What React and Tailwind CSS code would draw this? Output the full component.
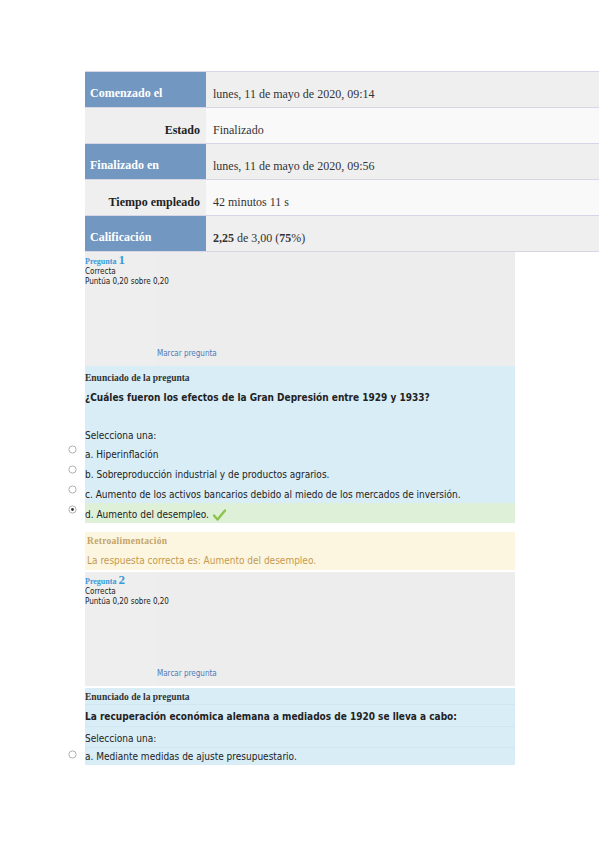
import React from 'react';

const serif = { fontFamily: '"Liberation Serif", "DejaVu Serif", serif' };
const sans = { fontFamily: '"DejaVu Sans Condensed", "DejaVu Sans", sans-serif' };

const summary = [
  { label: 'Comenzado el', value: 'lunes, 11 de mayo de 2020, 09:14', blue: true },
  { label: 'Estado', value: 'Finalizado' },
  { label: 'Finalizado en', value: 'lunes, 11 de mayo de 2020, 09:56', blue: true },
  { label: 'Tiempo empleado', value: '42 minutos 11 s' },
  {
    label: 'Calificación',
    value: (
      <>
        <b>2,25</b>&nbsp;de 3,00 (<b>75</b>%)
      </>
    ),
    blue: true,
  },
];

const Radio = ({ checked }) => (
  <div className="w-[20px] shrink-0 bg-white pl-[3px] pt-[2px]">
    <svg width="9" height="9" viewBox="0 0 9 9">
      <circle cx="4.5" cy="4.5" r="3.6" fill="#fff" stroke="#a8a8a8" strokeWidth="0.9" />
      {checked && <circle cx="4.5" cy="4.5" r="1.4" fill="#333" />}
    </svg>
  </div>
);

const QuestionInfo = ({ num }) => (
  <div className="w-[430px] h-[114px] bg-[#eeeeee] flex">
    <div className="relative z-10 w-[72px] h-full pt-[3px] text-[8px] leading-[10px] text-[#222] whitespace-nowrap" style={sans}>
      <div className="text-[#3a9ad9] font-bold" style={serif}>
        <span className="text-[8px]">Pregunta </span>
        <span className="text-[13px]">{num}</span>
      </div>
      <div>Correcta</div>
      <div>Puntúa 0,20 sobre 0,20</div>
    </div>
    <div className="flex-1 bg-[#ededed] flex items-end pb-[6px]">
      <span className="text-[8px] text-[#4a7cb8]" style={sans}>Marcar pregunta</span>
    </div>
  </div>
);

const Option = ({ text, checked, correct, green, short }) => (
  <div className={`flex -ml-[20px] w-[450px] ${short ? 'h-[17px]' : 'h-[20px]'}`}>
    <Radio checked={checked} />
    <div
      className={`flex-1 flex items-end pb-[1px] text-[10px] text-[#222] ${green ? 'bg-[#dff0d8]' : 'bg-[#d9edf7]'}`}
      style={sans}
    >
      <span>{text}</span>
      {correct && (
        <svg className="ml-[4px] mb-[1px]" width="13" height="12" viewBox="0 0 13 12">
          <path d="M1 6.5 L4.5 10.5 L12 1.5" fill="none" stroke="#8cc34a" strokeWidth="2.4" strokeLinecap="round" strokeLinejoin="round" />
        </svg>
      )}
    </div>
  </div>
);

export default function App() {
  return (
    <div className="min-h-[848px] bg-white pt-[71px] pl-[85px]">
      <div className="border-t border-[#d6d6e6]">
        {summary.map((row, i) => (
          <div key={i} className="flex h-[36px] border-b border-[#d6d6e6]" style={serif}>
            <div
              className={`w-[121px] shrink-0 flex items-center text-[12px] font-bold ${
                row.blue ? 'bg-[#7297c0] text-white pl-[5px] pt-[6px]' : 'bg-[#efefef] text-[#222] justify-end pr-[6px] pt-[8px]'
              }`}
            >
              {row.label}
            </div>
            <div
              className={`flex-1 flex items-center pl-[7px] pt-[9px] text-[12px] text-[#333] ${
                row.blue ? 'bg-[#efefef]' : 'bg-[#f9f9f9]'
              }`}
            >
              {row.value}
            </div>
          </div>
        ))}
      </div>

      <QuestionInfo num="1" />

      <div className="w-[430px] bg-[#d9edf7]">
        <div className="h-[19px] flex items-end text-[9.5px] font-bold text-[#333]" style={serif}>
          Enunciado de la pregunta
        </div>
        <div className="h-[20px] flex items-end text-[10px] font-bold text-[#222]" style={sans}>
          ¿Cuáles fueron los efectos de la Gran Depresión entre 1929 y 1933?
        </div>
        <div className="h-[29px]" />
        <div className="h-[9px] flex items-end text-[10px] text-[#222]" style={sans}>
          Selecciona una:
        </div>
        <Option text="a. Hiperinflación" />
        <Option text="b. Sobreproducción industrial y de productos agrarios." />
        <Option text="c. Aumento de los activos bancarios debido al miedo de los mercados de inversión." />
        <Option text="d. Aumento del desempleo." checked correct green />
      </div>

      <div className="h-[9px]" />
      <div className="w-[430px] h-[38px] bg-[#fcf6e1] pl-[2px]">
        <div className="pt-[2px] text-[9.5px] font-bold text-[#c4a468] tracking-[0.3px]" style={serif}>
          Retroalimentación
        </div>
        <div className="pt-[5px] text-[10px] text-[#c49a4e]" style={sans}>
          La respuesta correcta es: Aumento del desempleo.
        </div>
      </div>
      <div className="h-[2px]" />

      <QuestionInfo num="2" />

      <div className="h-[2px]" />
      <div className="w-[430px] bg-[#d9edf7]">
        <div className="h-[17px] flex items-end text-[9.5px] font-bold text-[#333] border-b border-[#d0e6f2]" style={serif}>
          Enunciado de la pregunta
        </div>
        <div className="h-[22px] flex items-end pb-[2px] text-[10px] font-bold text-[#222] border-b border-[#d0e6f2]" style={sans}>
          La recuperación económica alemana a mediados de 1920 se lleva a cabo:
        </div>
        <div className="h-[21px] flex items-end pb-[1px] text-[10px] text-[#222] border-b border-[#d0e6f2]" style={sans}>
          Selecciona una:
        </div>
        <Option text="a. Mediante medidas de ajuste presupuestario." short />
      </div>
    </div>
  );
}
